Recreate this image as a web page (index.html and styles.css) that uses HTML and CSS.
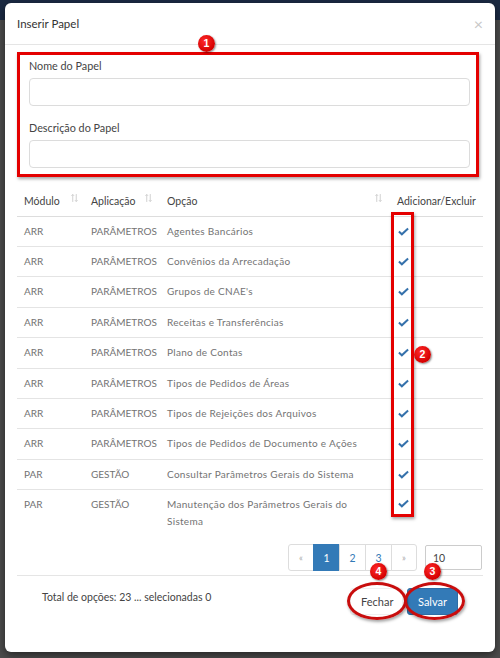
FILE: index.html
```html
<!DOCTYPE html>
<html lang="pt">
<head>
<meta charset="utf-8">
<title>Inserir Papel</title>
<link rel="stylesheet" href="styles.css">
</head>
<body>
<div class="modal">
  <div class="modal-header">
    <span class="modal-title">Inserir Papel</span>
    <span class="close">×</span>
  </div>
  <div class="modal-body">
    <div class="form-section">
      <label class="lbl">Nome do Papel</label>
      <div class="input"></div>
      <label class="lbl lbl2">Descrição do Papel</label>
      <div class="input"></div>
      <div class="hl-box"></div>
    </div>

    <table class="grid">
      <colgroup><col class="c1"><col class="c2"><col class="c3"><col class="c4"></colgroup>
      <thead>
        <tr>
          <th><div class="th-in">Módulo<svg class="sort" viewBox="0 0 8 10"><path d="M2 9.5V1M0.5 2.5L2 1L3.5 2.5M6 0.5V9M4.5 7.5L6 9L7.5 7.5" fill="none" stroke="currentColor" stroke-width="0.9"/></svg></div></th>
          <th><div class="th-in">Aplicação<svg class="sort" viewBox="0 0 8 10"><path d="M2 9.5V1M0.5 2.5L2 1L3.5 2.5M6 0.5V9M4.5 7.5L6 9L7.5 7.5" fill="none" stroke="currentColor" stroke-width="0.9"/></svg></div></th>
          <th><div class="th-in">Opção<svg class="sort" viewBox="0 0 8 10"><path d="M2 9.5V1M0.5 2.5L2 1L3.5 2.5M6 0.5V9M4.5 7.5L6 9L7.5 7.5" fill="none" stroke="currentColor" stroke-width="0.9"/></svg></div></th>
          <th>Adicionar/Excluir</th>
        </tr>
      </thead>
      <tbody>
        <tr><td>ARR</td><td>PARÂMETROS</td><td>Agentes Bancários</td><td class="chk"><svg viewBox="0 0 12 9"><path d="M1 4.6L4.2 7.6L11 1.2" fill="none" stroke="currentColor" stroke-width="2.2"/></svg></td></tr>
        <tr><td>ARR</td><td>PARÂMETROS</td><td>Convênios da Arrecadação</td><td class="chk"><svg viewBox="0 0 12 9"><path d="M1 4.6L4.2 7.6L11 1.2" fill="none" stroke="currentColor" stroke-width="2.2"/></svg></td></tr>
        <tr><td>ARR</td><td>PARÂMETROS</td><td>Grupos de CNAE's</td><td class="chk"><svg viewBox="0 0 12 9"><path d="M1 4.6L4.2 7.6L11 1.2" fill="none" stroke="currentColor" stroke-width="2.2"/></svg></td></tr>
        <tr><td>ARR</td><td>PARÂMETROS</td><td>Receitas e Transferências</td><td class="chk"><svg viewBox="0 0 12 9"><path d="M1 4.6L4.2 7.6L11 1.2" fill="none" stroke="currentColor" stroke-width="2.2"/></svg></td></tr>
        <tr><td>ARR</td><td>PARÂMETROS</td><td>Plano de Contas</td><td class="chk"><svg viewBox="0 0 12 9"><path d="M1 4.6L4.2 7.6L11 1.2" fill="none" stroke="currentColor" stroke-width="2.2"/></svg></td></tr>
        <tr><td>ARR</td><td>PARÂMETROS</td><td>Tipos de Pedidos de Áreas</td><td class="chk"><svg viewBox="0 0 12 9"><path d="M1 4.6L4.2 7.6L11 1.2" fill="none" stroke="currentColor" stroke-width="2.2"/></svg></td></tr>
        <tr><td>ARR</td><td>PARÂMETROS</td><td>Tipos de Rejeições dos Arquivos</td><td class="chk"><svg viewBox="0 0 12 9"><path d="M1 4.6L4.2 7.6L11 1.2" fill="none" stroke="currentColor" stroke-width="2.2"/></svg></td></tr>
        <tr><td>ARR</td><td>PARÂMETROS</td><td>Tipos de Pedidos de Documento e Ações</td><td class="chk"><svg viewBox="0 0 12 9"><path d="M1 4.6L4.2 7.6L11 1.2" fill="none" stroke="currentColor" stroke-width="2.2"/></svg></td></tr>
        <tr><td>PAR</td><td>GESTÃO</td><td>Consultar Parâmetros Gerais do Sistema</td><td class="chk"><svg viewBox="0 0 12 9"><path d="M1 4.6L4.2 7.6L11 1.2" fill="none" stroke="currentColor" stroke-width="2.2"/></svg></td></tr>
        <tr class="last"><td>PAR</td><td>GESTÃO</td><td>Manutenção dos Parâmetros Gerais do Sistema</td><td class="chk"><svg viewBox="0 0 12 9"><path d="M1 4.6L4.2 7.6L11 1.2" fill="none" stroke="currentColor" stroke-width="2.2"/></svg></td></tr>
      </tbody>
    </table>

    <div class="pager-row">
      <ul class="pagination">
        <li class="muted">«</li>
        <li class="active">1</li>
        <li>2</li>
        <li>3</li>
        <li class="muted">»</li>
      </ul>
      <div class="size-input">10</div>
    </div>
  </div>

  <div class="modal-footer">
    <span class="total">Total de opções: 23 ... selecionadas 0</span>
    <div class="btns">
      <button class="btn btn-default">Fechar</button>
      <button class="btn btn-primary">Salvar</button>
    </div>
  </div>

  <div class="hl-col"></div>
  <div class="oval oval-fechar"></div>
  <div class="oval oval-salvar"></div>
  <span class="badge b1">1</span>
  <span class="badge b2">2</span>
  <span class="badge b3">3</span>
  <span class="badge b4">4</span>
</div>
</body>
</html>
```

FILE: styles.css
```css
* { box-sizing: border-box; }

html, body { height: 100%; }

body {
  margin: 0;
  font-family: Lato, "Open Sans", "Liberation Sans", sans-serif;
  background: linear-gradient(#1b2a43 0, #1b2a43 20px, #4c4c4c 20px);
  overflow: hidden;
}

.modal {
  position: relative;
  width: 490px;
  height: 649px;
  margin: 3px 0 0 5px;
  background: #fff;
  border-radius: 6px;
  box-shadow: 0 3px 9px rgba(0, 0, 0, 0.5);
  display: flex;
  flex-direction: column;
}

.modal-header {
  height: 42px;
  padding: 0 12px;
  display: flex;
  align-items: center;
  justify-content: space-between;
  border-bottom: 1px solid #e5e5e5;
  flex: none;
}

.modal-title {
  font-size: 11.5px;
  color: #333;
}

.close {
  font-size: 16px;
  color: #c8c8c8;
  line-height: 1;
}

.modal-body {
  padding: 0 12px;
  flex: 1;
}

.form-section {
  position: relative;
  margin: 7px 4px 0 0;
  padding: 7px 9px 9px 12px;
}

.lbl {
  display: block;
  font-size: 10.8px;
  line-height: 14px;
  color: #444;
  margin-bottom: 5px;
}

.lbl2 { margin-top: 15px; }

.input {
  height: 28px;
  border: 1px solid #dcdcdc;
  border-radius: 4px;
  background: #fff;
}

.hl-box {
  position: absolute;
  inset: 0;
  border: 3px solid #e40000;
  box-shadow: 1px 2px 3px rgba(0, 0, 0, 0.35);
  pointer-events: none;
}

.grid {
  width: 466px;
  margin-top: 9px;
  border-collapse: collapse;
  table-layout: fixed;
  font-size: 10px;
}

.c1 { width: 67px; }
.c2 { width: 76px; }
.c3 { width: 230px; }
.c4 { width: 93px; }

.grid th {
  text-align: left;
  font-weight: normal;
  color: #444;
  font-size: 10.5px;
  height: 30px;
  padding: 0 8px 0 7px;
  border-bottom: 1px solid #ddd;
}

.grid th:first-child { padding-right: 6px; }

.th-in {
  display: flex;
  align-items: center;
  justify-content: space-between;
}

.sort {
  width: 7px;
  height: 10px;
  color: #c4c4c4;
  margin-top: -5px;
}

.grid td {
  padding: 7px 7px;
  line-height: 15.4px;
  color: #737373;
  border-top: 1px solid #e4e4e4;
  vertical-align: top;
}

.grid td:nth-child(3) { letter-spacing: 0.3px; }

.grid tbody tr:first-child td { border-top: none; }

.grid tr.last td { line-height: 17px; padding-top: 6px; }

.grid td.chk {
  color: #3571ab;
  padding-left: 8px;
}

.chk svg {
  display: block;
  width: 11px;
  height: 9px;
  margin-top: 3px;
}

.pager-row {
  display: flex;
  justify-content: flex-end;
  align-items: center;
  gap: 8px;
  padding-right: 1px;
  margin-top: 7px;
}

.pagination {
  display: flex;
  list-style: none;
  margin: 0;
  padding: 0;
}

.pagination li {
  width: 27px;
  height: 27px;
  border: 1px solid #ddd;
  margin-left: -1px;
  display: flex;
  align-items: center;
  justify-content: center;
  font-size: 10.5px;
  color: #337ab7;
  background: #fff;
}

.pagination li:first-child { border-radius: 3px 0 0 3px; width: 26px; }
.pagination li:last-child { border-radius: 0 3px 3px 0; width: 26px; }

.pagination li.muted { color: #aaa; font-size: 9px; }

.pagination li.active {
  background: #337ab7;
  border-color: #337ab7;
  color: #fff;
}

.size-input {
  width: 57px;
  height: 25px;
  border: 1px solid #ccc;
  border-radius: 2px;
  font-size: 10.5px;
  color: #444;
  padding: 7px 0 0 7px;
  line-height: 11px;
}

.modal-footer {
  margin: 0 12px;
  border-top: 1px solid #e5e5e5;
  height: 77px;
  padding: 12px 25px 0 25px;
  display: flex;
  justify-content: space-between;
  align-items: flex-start;
  flex: none;
}

.total {
  font-size: 10.5px;
  color: #444;
  margin-top: 3px;
}

.btns { display: flex; gap: 4px; }

.btn {
  font-family: inherit;
  font-size: 11px;
  height: 27px;
  border-radius: 3px;
  padding: 0 10px;
  cursor: pointer;
}

.btn-default {
  background: #fff;
  border: 1px solid #f0f0f0;
  color: #444;
  width: 53px;
}

.btn-primary {
  background: #337ab7;
  border: 1px solid #2e6da4;
  color: #fff;
  width: 51px;
}

.hl-col {
  position: absolute;
  left: 386px;
  top: 209px;
  width: 23px;
  height: 305px;
  border: 3px solid #e40000;
  box-shadow: 1px 2px 3px rgba(0, 0, 0, 0.35);
  pointer-events: none;
}

.oval {
  position: absolute;
  top: 579px;
  height: 38px;
  border: 3px solid #c80d0d;
  border-radius: 50%;
  box-shadow: 1px 2px 3px rgba(0, 0, 0, 0.35);
  pointer-events: none;
}

.oval-fechar { left: 342px; width: 60px; }
.oval-salvar { left: 399px; width: 61px; }

.badge {
  position: absolute;
  width: 17px;
  height: 17px;
  border-radius: 50%;
  background: radial-gradient(circle at 40% 35%, #ff2a2a, #d40000 70%);
  color: #fff;
  font-family: "Liberation Sans", Arial, sans-serif;
  font-weight: bold;
  font-size: 10.5px;
  line-height: 17px;
  text-align: center;
  box-shadow: 1px 1px 2px rgba(0, 0, 0, 0.45);
}

.b1 { left: 193px; top: 32px; }
.b2 { left: 409px; top: 343px; }
.b3 { left: 419px; top: 560px; }
.b4 { left: 365px; top: 560px; }
```
